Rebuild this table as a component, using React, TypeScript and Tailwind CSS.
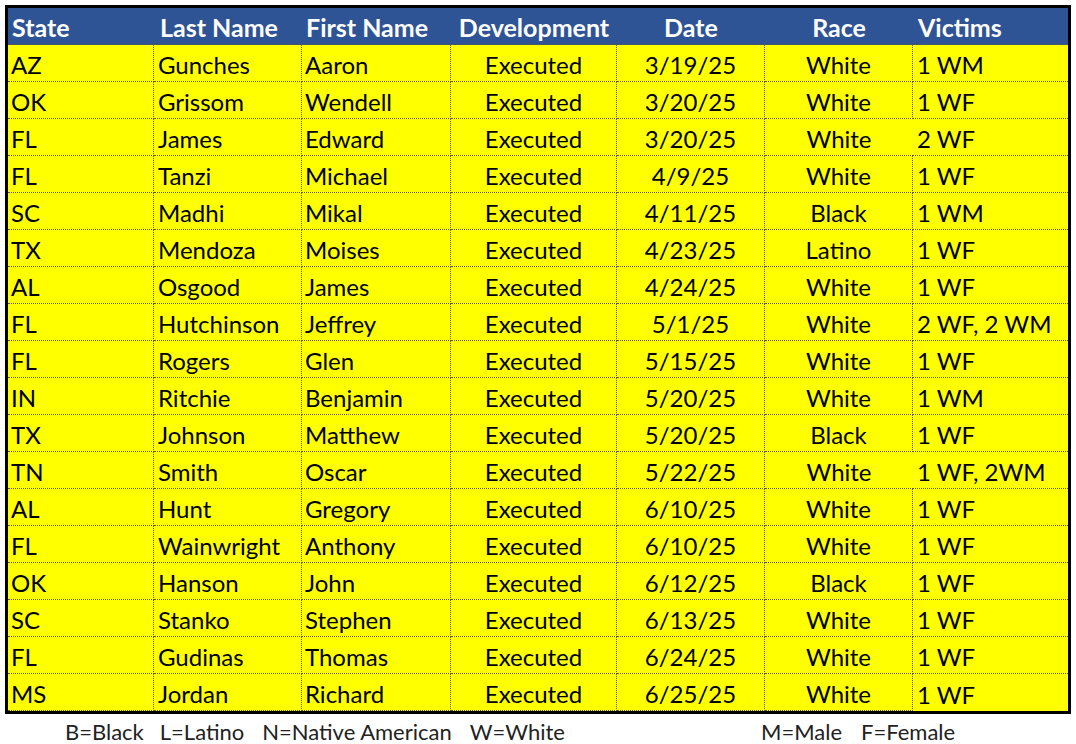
const rows = [
  ['AZ', 'Gunches', 'Aaron', '3/19/25', 'White', '1 WM'],
  ['OK', 'Grissom', 'Wendell', '3/20/25', 'White', '1 WF'],
  ['FL', 'James', 'Edward', '3/20/25', 'White', '2 WF'],
  ['FL', 'Tanzi', 'Michael', '4/9/25', 'White', '1 WF'],
  ['SC', 'Madhi', 'Mikal', '4/11/25', 'Black', '1 WM'],
  ['TX', 'Mendoza', 'Moises', '4/23/25', 'Latino', '1 WF'],
  ['AL', 'Osgood', 'James', '4/24/25', 'White', '1 WF'],
  ['FL', 'Hutchinson', 'Jeffrey', '5/1/25', 'White', '2 WF, 2 WM'],
  ['FL', 'Rogers', 'Glen', '5/15/25', 'White', '1 WF'],
  ['IN', 'Ritchie', 'Benjamin', '5/20/25', 'White', '1 WM'],
  ['TX', 'Johnson', 'Matthew', '5/20/25', 'Black', '1 WF'],
  ['TN', 'Smith', 'Oscar', '5/22/25', 'White', '1 WF, 2WM'],
  ['AL', 'Hunt', 'Gregory', '6/10/25', 'White', '1 WF'],
  ['FL', 'Wainwright', 'Anthony', '6/10/25', 'White', '1 WF'],
  ['OK', 'Hanson', 'John', '6/12/25', 'Black', '1 WF'],
  ['SC', 'Stanko', 'Stephen', '6/13/25', 'White', '1 WF'],
  ['FL', 'Gudinas', 'Thomas', '6/24/25', 'White', '1 WF'],
  ['MS', 'Jordan', 'Richard', '6/25/25', 'White', '1 WF'],
]

// rows where the victims cell has no divider on its left
const openVictims = [2, 11]

const cols = 'grid grid-cols-[146px_148px_149px_166px_148px_148px_155px]'
const cell = 'h-[37px] flex items-center border-b border-dotted border-[#5c5c3c]'

export default function App() {
  return (
    <div className="w-[1076px] h-[744px] overflow-hidden bg-white text-black" style={{ fontFamily: 'Lato, "Open Sans", sans-serif' }}>
      <div className="ml-[5px] mt-[5px] w-[1066px] border-[3px] border-black bg-[#ffff00]">
        <div className={`${cols} bg-[#2f5496] text-white font-bold text-[25px] leading-none`}>
          <div className={`${cell} pl-[4px] pt-[3px]`}>State</div>
          <div className={`${cell} pl-[6px] pt-[3px]`}>Last Name</div>
          <div className={`${cell} pl-[4px] pt-[3px]`}>First Name</div>
          <div className={`${cell} justify-center pt-[3px]`}>Development</div>
          <div className={`${cell} justify-center pt-[3px]`}>Date</div>
          <div className={`${cell} justify-center pt-[3px]`}>Race</div>
          <div className={`${cell} pl-[5px] pt-[3px]`}>Victims</div>
        </div>
        {rows.map((r, i) => (
          <div key={i} className={`${cols} text-[24px] leading-none`}>
            <div className={`${cell} pl-[3px] pt-[4px] border-r`}>{r[0]}</div>
            <div className={`${cell} pl-[4px] pt-[4px] border-r`}>{r[1]}</div>
            <div className={`${cell} pl-[3px] pt-[4px] border-r`}>{r[2]}</div>
            <div className={`${cell} justify-center pt-[4px] border-r`}>Executed</div>
            <div className={`${cell} justify-center pt-[4px] border-r`}>{r[3]}</div>
            <div className={`${cell} justify-center pt-[4px] ${openVictims.includes(i) ? '' : 'border-r'}`}>{r[4]}</div>
            <div className={`${cell} pl-[4px] pt-[4px] ${i === rows.length - 1 ? 'border-b-0' : ''}`}>{r[5]}</div>
          </div>
        ))}
      </div>
      <div className="flex text-[22px] text-[#222] mt-[8px] leading-[20px]">
        <span className="ml-[65px]">B=Black</span>
        <span className="ml-[16px]">L=Latino</span>
        <span className="ml-[18px]">N=Native American</span>
        <span className="ml-[18px]">W=White</span>
        <span className="ml-[196px]">M=Male</span>
        <span className="ml-[19px]">F=Female</span>
      </div>
    </div>
  )
}
